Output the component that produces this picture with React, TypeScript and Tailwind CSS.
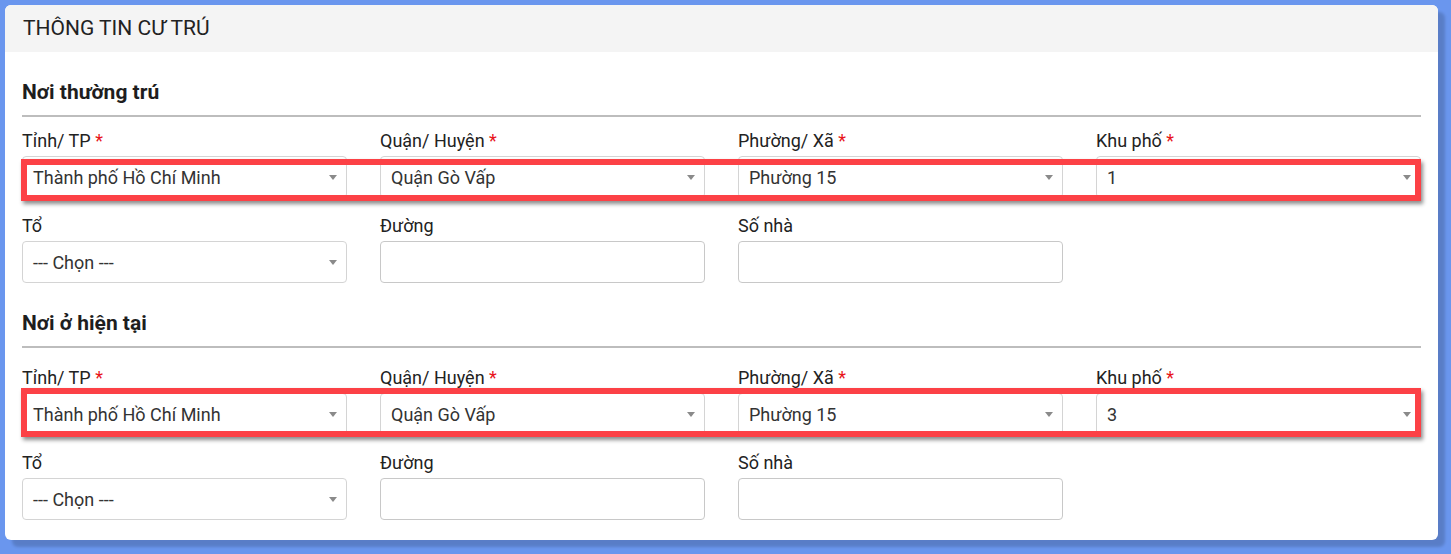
import React from "react";

interface fieldData {
  label: string;
  required?: boolean;
  value?: string;
  kind: "select" | "input";
}

const Caret = () => (
  <svg width="8" height="5" viewBox="0 0 8 5" className="shrink-0">
    <path d="M0 0 L8 0 L4 5 Z" fill="#8a8a8a" />
  </svg>
);

const Field: React.FC<{ data: fieldData }> = ({ data }) => {
  return (
    <div className="flex flex-col">
      <label className="text-[18px] leading-[20px] text-[#222] mb-[5px]">
        {data.label}
        {data.required && <span className="text-[#e8141b]"> *</span>}
      </label>
      {data.kind === "select" ? (
        <div className="h-[42px] border border-[#d4d4d4] rounded-[4px] bg-white pl-[10px] pr-[9px] flex items-center justify-between">
          <span className="text-[18px] text-[#333]">{data.value}</span>
          <Caret />
        </div>
      ) : (
        <div className="h-[42px] border border-[#c8c8c8] rounded-[4px] bg-white" />
      )}
    </div>
  );
};

const Section: React.FC<{
  title: string;
  khuPho: string;
  mt: string;
  gap: string;
  mark: string;
}> = ({ title, khuPho, mt, gap, mark }) => {
  const row1: Array<fieldData> = [
    { label: "Tỉnh/ TP", required: true, value: "Thành phố Hồ Chí Minh", kind: "select" },
    { label: "Quận/ Huyện", required: true, value: "Quận Gò Vấp", kind: "select" },
    { label: "Phường/ Xã", required: true, value: "Phường 15", kind: "select" },
    { label: "Khu phố", required: true, value: khuPho, kind: "select" },
  ];
  const row2: Array<fieldData> = [
    { label: "Tổ", value: "--- Chọn ---", kind: "select" },
    { label: "Đường", kind: "input" },
    { label: "Số nhà", kind: "input" },
  ];
  return (
    <div className={mt}>
      <h3 className="text-[21px] leading-[22px] font-bold text-[#1e1e1e]">{title}</h3>
      <div className="h-[2px] bg-[#bdbdbd] mt-[12px]" />

      {/* Row with the required fields, marked in red */}
      <div className={`relative grid grid-cols-4 gap-x-[33px] ${gap}`}>
        {row1.map((f) => (
          <Field key={f.label} data={f} />
        ))}
        <div
          className={`absolute -left-[1px] right-0 border-[6px] border-[#fc4146] shadow-[2px_3px_4px_rgba(0,0,0,0.45)] pointer-events-none ${mark}`}
        />
      </div>

      <div className="grid grid-cols-4 gap-x-[33px] mt-[18px]">
        {row2.map((f) => (
          <Field key={f.label} data={f} />
        ))}
      </div>
    </div>
  );
};

const App = () => {
  return (
    <div
      className="w-[1451px] h-[554px] bg-[#6a96ee] pt-[5px] pl-[5px]"
      style={{ fontFamily: "Roboto, 'Noto Sans', sans-serif" }}
    >
      <div className="w-[1433px] h-[535px] bg-white rounded-[6px] shadow-[7px_7px_3px_rgba(0,0,0,0.16)] overflow-hidden">
        {/* Header */}
        <div className="h-[47px] bg-[#f4f4f4] flex items-center px-[18px]">
          <h2 className="text-[21px] text-[#222] uppercase">Thông tin cư trú</h2>
        </div>

        <div className="px-[17px]">
          <Section title="Nơi thường trú" khuPho="1" mt="mt-[29px]" gap="mt-[14px]" mark="top-[28px] h-[42px]" />
          <Section title="Nơi ở hiện tại" khuPho="3" mt="mt-[29px]" gap="mt-[20px]" mark="top-[20px] h-[49px]" />
        </div>
      </div>
    </div>
  );
};

export default App;
